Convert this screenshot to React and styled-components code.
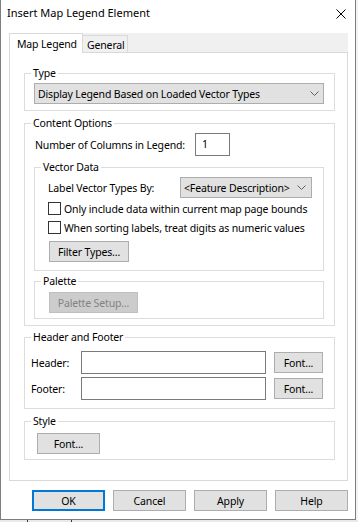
import React from "react";
import styled, { createGlobalStyle } from "styled-components";

const GlobalStyle = createGlobalStyle`
  html, body { margin: 0; padding: 0; }
  body {
    font-family: "Noto Sans", "DejaVu Sans", sans-serif;
    font-size: 10.5px;
    letter-spacing: -0.15px;
    color: #000;
    background: #f0f0f0;
  }
  * { box-sizing: border-box; }
`;

const Screen = styled.div`
  width: 358px;
  height: 522px;
  display: flex;
  flex-direction: column;
  overflow: hidden;
`;

const TopRow = styled.div`
  display: flex;
  height: 520px;
`;

const RightEdge = styled.div`
  width: 2px;
  background: #f4f4f4;
`;

const BottomEdge = styled.div`
  height: 2px;
  background:
    linear-gradient(#3a3a3a, #3a3a3a) 27px 0 / 1px 100% no-repeat,
    linear-gradient(#3a3a3a, #3a3a3a) 71px 0 / 1px 100% no-repeat,
    #e9e9e9;
`;

const Window = styled.div`
  width: 356px;
  height: 520px;
  background: #fff;
  border: 1px solid #7d7d7d;
  border-top: none;
  display: flex;
  flex-direction: column;
`;

const TitleBar = styled.div`
  height: 33px;
  flex: none;
  display: flex;
  justify-content: space-between;
  align-items: flex-start;
  padding: 5px 9px 0 6px;
`;

const Title = styled.div`
  font-size: 11px;
  letter-spacing: 0;
  line-height: 16px;
`;

const CloseIcon = styled.svg`
  margin-top: 4px;
  display: block;
`;

const Body = styled.div`
  padding-left: 8px;
  display: flex;
  flex-direction: column;
`;

const TabControl = styled.div`
  width: 339px;
  display: flex;
  flex-direction: column;
`;

const TabStrip = styled.div`
  height: 19px;
  background: #f0f0f0;
  display: flex;
  align-items: flex-end;
`;

const Tab = styled.div`
  width: ${(p) => p.$w};
  height: ${(p) => (p.$active ? "20px" : "17px")};
  margin-bottom: ${(p) => (p.$active ? "-1px" : "0")};
  position: relative;
  z-index: ${(p) => (p.$active ? 1 : 0)};
  background: ${(p) => (p.$active ? "#fff" : "#f0f0f0")};
  border: 1px solid #d9d9d9;
  border-bottom: none;
  border-left: ${(p) => (p.$active ? "1px solid #d9d9d9" : "none")};
  padding: ${(p) => (p.$active ? "0 0 0 7px" : "1px 0 0 4px")};
  display: flex;
  align-items: center;
  line-height: 14px;
  white-space: nowrap;
`;

const TabPage = styled.div`
  height: 429px;
  border: 1px solid #d9d9d9;
  background: #fff;
  padding: 12px 12px 20px 14px;
  display: flex;
  flex-direction: column;
`;

const Group = styled.fieldset`
  margin: ${(p) => p.$margin || "0"};
  padding: 0;
  min-width: 0;
  border: 1px solid #dcdcdc;
  border-radius: 0;
`;

const Legend = styled.legend`
  margin-left: 6px;
  padding: 0 2px;
  line-height: 16px;
  height: 16px;
`;

const GroupBody = styled.div`
  padding: ${(p) => p.$pad};
  display: flex;
  flex-direction: column;
`;

const Row = styled.div`
  display: flex;
  align-items: center;
  margin: ${(p) => p.$margin || "0"};
`;

const Label = styled.div`
  width: ${(p) => p.$w};
  flex: none;
  line-height: 16px;
  white-space: nowrap;
`;

const Combo = styled.div`
  width: ${(p) => p.$w};
  height: 21px;
  flex: none;
  background: #e1e1e1;
  border: 1px solid #adadad;
  display: flex;
  align-items: center;
  justify-content: space-between;
  padding: 0 ${(p) => p.$chev || "4px"} 0 3px;
  white-space: nowrap;
  line-height: 16px;
`;

const Chevron = styled.svg`
  display: block;
  flex: none;
`;

const TextBox = styled.div`
  width: ${(p) => p.$w};
  height: 23px;
  flex: none;
  background: #fff;
  border: 1px solid #7a7a7a;
  padding: 2px 0 0 6px;
  line-height: 16px;
`;

const Button = styled.div`
  width: ${(p) => p.$w};
  height: 21px;
  flex: none;
  margin: ${(p) => p.$margin || "0"};
  background: ${(p) => (p.$disabled ? "#cccccc" : "#e1e1e1")};
  border: ${(p) => (p.$default ? "2px solid #0078d7" : p.$disabled ? "1px solid #bfbfbf" : "1px solid #adadad")};
  color: ${(p) => (p.$disabled ? "#838383" : "#000")};
  display: flex;
  align-items: center;
  justify-content: center;
  line-height: 16px;
  white-space: nowrap;
`;

const Check = styled.div`
  display: flex;
  align-items: center;
  height: 19px;
  padding-left: 13px;
  white-space: nowrap;
`;

const CheckBox = styled.div`
  width: 13px;
  height: 13px;
  flex: none;
  border: 1px solid #333;
  background: #fff;
  margin-right: 3px;
`;

const ButtonBar = styled.div`
  width: 339px;
  margin-top: 9px;
  display: flex;
  justify-content: flex-end;
  gap: 8px;
`;

function ChevronDown() {
  return (
    <Chevron width="9" height="5" viewBox="0 0 9 5">
      <polyline points="0.5,0.5 4.5,4.5 8.5,0.5" fill="none" stroke="#606060" strokeWidth="1" />
    </Chevron>
  );
}

export default function App() {
  return (
    <Screen>
      <GlobalStyle />
      <TopRow>
        <Window>
          <TitleBar>
            <Title>Insert Map Legend Element</Title>
            <CloseIcon width="10" height="10" viewBox="0 0 10 10">
              <path d="M0.5 0.5 L9.5 9.5 M9.5 0.5 L0.5 9.5" stroke="#000" strokeWidth="1" fill="none" />
            </CloseIcon>
          </TitleBar>
          <Body>
            <TabControl>
              <TabStrip>
                <Tab $active $w="74px">Map Legend</Tab>
                <Tab $w="45px">General</Tab>
              </TabStrip>
              <TabPage>
                <Group>
                  <Legend>Type</Legend>
                  <GroupBody $pad="2px 10px 6px 9px">
                    <Combo $w="290px" $chev="4px">
                      <span>Display Legend Based on Loaded Vector Types</span>
                      <ChevronDown />
                    </Combo>
                  </GroupBody>
                </Group>

                <Group $margin="4px 0 0 0">
                  <Legend>Content Options</Legend>
                  <GroupBody $pad="2px 10px 6px 9px">
                    <Row $margin="0 0 0 1px">
                      <Label $w="160px">Number of Columns in Legend:</Label>
                      <TextBox $w="35px">1</TextBox>
                    </Row>
                    <Group $margin="3px 0 0 0">
                      <Legend>Vector Data</Legend>
                      <GroupBody $pad="2px 11px 8px 0">
                        <Row $margin="0 0 1px 13px">
                          <Label $w="132px">Label Vector Types By:</Label>
                          <Combo $w="132px" $chev="5px">
                            <span>&lt;Feature Description&gt;</span>
                            <ChevronDown />
                          </Combo>
                        </Row>
                        <Check>
                          <CheckBox />
                          Only include data within current map page bounds
                        </Check>
                        <Check>
                          <CheckBox />
                          When sorting labels, treat digits as numeric values
                        </Check>
                        <Button $w="80px" $margin="4px 0 0 14px">Filter Types...</Button>
                      </GroupBody>
                    </Group>
                    <Group $margin="2px 0 0 0">
                      <Legend>Palette</Legend>
                      <GroupBody $pad="3px 0 5px 14px">
                        <Button $w="89px" $disabled>Palette Setup...</Button>
                      </GroupBody>
                    </Group>
                  </GroupBody>
                </Group>

                <Group $margin="3px 0 0 0">
                  <Legend>Header and Footer</Legend>
                  <GroupBody $pad="6px 11px 8px 6px">
                    <Row>
                      <Label $w="50px">Header:</Label>
                      <TextBox $w="185px" />
                      <Button $w="49px" $margin="0 0 0 8px">Font...</Button>
                    </Row>
                    <Row $margin="3px 0 0 0">
                      <Label $w="50px">Footer:</Label>
                      <TextBox $w="185px" />
                      <Button $w="49px" $margin="0 0 0 8px">Font...</Button>
                    </Row>
                  </GroupBody>
                </Group>

                <Group $margin="4px 0 0 0">
                  <Legend>Style</Legend>
                  <GroupBody $pad="4px 0 5px 12px">
                    <Button $w="63px">Font...</Button>
                  </GroupBody>
                </Group>
              </TabPage>
            </TabControl>
            <ButtonBar>
              <Button $w="73px" $default>OK</Button>
              <Button $w="73px">Cancel</Button>
              <Button $w="73px">Apply</Button>
              <Button $w="73px">Help</Button>
            </ButtonBar>
          </Body>
        </Window>
        <RightEdge />
      </TopRow>
      <BottomEdge />
    </Screen>
  );
}
